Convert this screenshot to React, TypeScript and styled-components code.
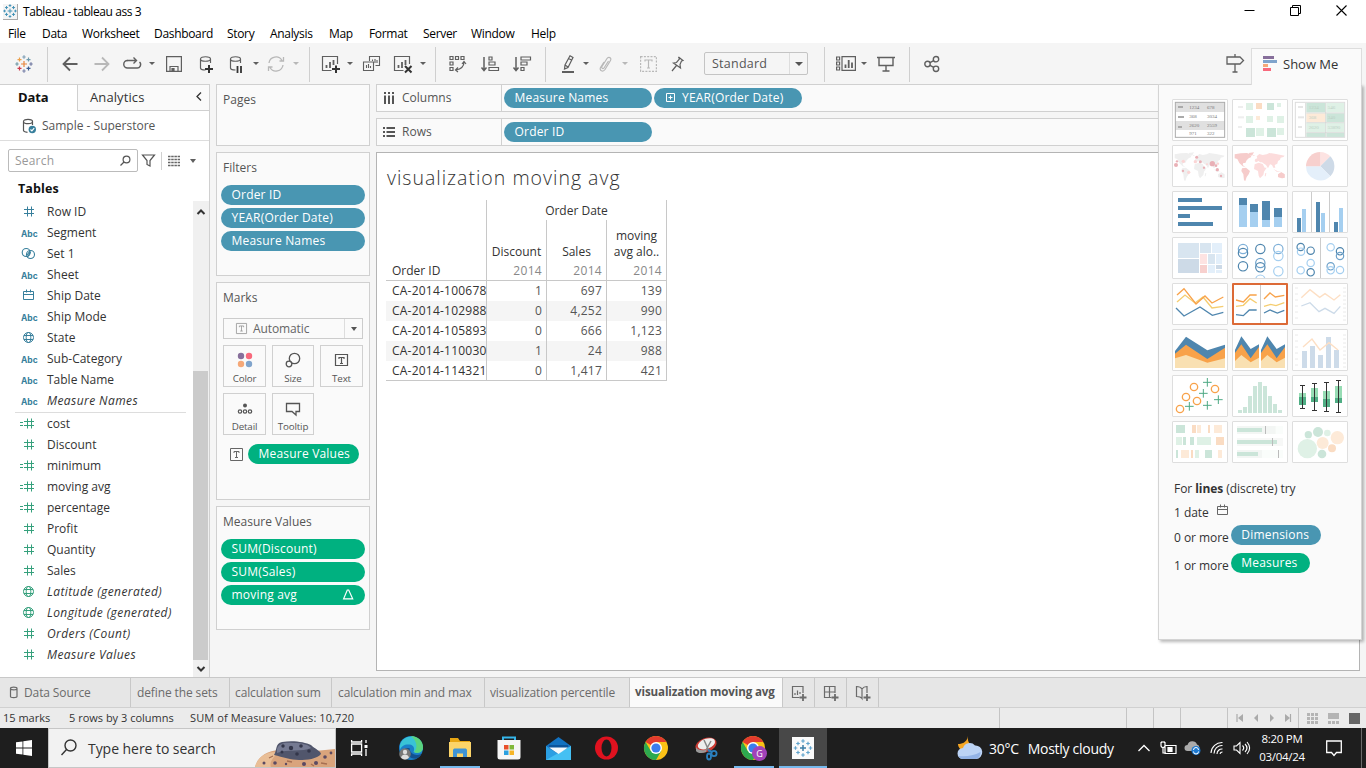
import React from "react";
import styled, { createGlobalStyle, css } from "styled-components";

const UI = `"Open Sans", "Noto Sans", sans-serif`;
const BLUE = "#4996b2";
const GREEN = "#00b180";
const INK = "#555";
const LINE = "#d0d0d0";

const Global = createGlobalStyle`
  * { box-sizing: border-box; }
  body { margin: 0; background: #f5f5f5; font-family: ${UI}; font-size: 12px; color: #333; overflow: hidden; }
  svg { display: block; flex: none; overflow: visible; }
`;

const Screen = styled.div`
  width: 1366px;
  height: 768px;
  display: flex;
  flex-direction: column;
  position: relative;
  overflow: hidden;
  white-space: nowrap;
`;

/* ---------- title and menu ---------- */
const TitleBar = styled.header`
  height: 23px;
  background: #fff;
  display: flex;
  align-items: center;
  padding-left: 3px;
  color: #000;
  font-size: 12px;
  letter-spacing: -0.42px;
`;
const AppIcon = styled.span`
  width: 15px;
  height: 16px;
  margin-right: 5px;
  background: #f4f4f4;
  border-right: 1px solid #aaa;
  border-bottom: 1px solid #aaa;
`;
const WindowButtons = styled.div`
  margin-left: auto;
  display: flex;
  gap: 35px;
  padding-right: 19px;
  margin-top: -2px;
`;
const MenuBar = styled.nav`
  height: 20px;
  background: #fff;
  display: flex;
  align-items: center;
  color: #000;
`;
const MenuItem = styled.span<{ $w: number }>`
  width: ${(p) => p.$w}px;
  letter-spacing: -0.32px;
`;

/* ---------- toolbar ---------- */
const Toolbar = styled.div`
  height: 41px;
  background: #f5f5f5;
  display: flex;
  align-items: center;
`;
const Tool = styled.span<{ $w: number; $ml?: number; $dim?: boolean }>`
  width: ${(p) => p.$w}px;
  margin-left: ${(p) => p.$ml ?? 0}px;
  height: 40px;
  flex: none;
  display: flex;
  align-items: center;
  justify-content: center;
  color: ${(p) => (p.$dim ? "#b8b8b8" : "#5f5f5f")};
`;
const ToolSep = styled.i<{ $ml?: number }>`
  width: 1px;
  height: 35px;
  margin: 1px 0 0 ${(p) => p.$ml ?? 0}px;
  background: #cfcfcf;
`;
const Caret = styled.i<{ $s?: number }>`
  border: ${(p) => p.$s ?? 3}px solid transparent;
  border-top: ${(p) => (p.$s ?? 3) + 0.5}px solid currentColor;
  border-bottom: 0;
`;
const FitSelect = styled.div`
  width: 104px;
  height: 23px;
  margin-left: 15px;
  border: 1px solid #c4c4c4;
  border-radius: 2px;
  background: #f5f5f5;
  display: flex;
  align-items: center;
  padding-left: 7px;
  font-size: 12.5px;
  letter-spacing: 0.25px;
  color: ${INK};
`;
const SelectArrow = styled.span`
  margin-left: auto;
  width: 18px;
  height: 100%;
  border-left: 1px solid #ddd;
  display: flex;
  align-items: center;
  justify-content: center;
  color: #555;
`;

/* ---------- body ---------- */
const Body = styled.main`
  height: 593px;
  display: flex;
  background: #f5f5f5;
`;
const DataPane = styled.aside`
  width: 210px;
  background: #fff;
  border-right: 1px solid ${LINE};
  border-top: 1px solid ${LINE};
  display: flex;
  flex-direction: column;
`;
const PaneTabs = styled.div`
  display: flex;
  height: 26px;
`;
const DataTab = styled.b`
  width: 77px;
  padding: 3px 0 0 18px;
  font-size: 13px;
  color: #111;
  letter-spacing: -0.15px;
`;
const AnalyticsTab = styled.div`
  flex: 1;
  background: #fafafa;
  border-left: 1px solid ${LINE};
  border-bottom: 1px solid ${LINE};
  padding: 3px 6px 0 12px;
  display: flex;
  justify-content: space-between;
  font-size: 13px;
  letter-spacing: 0.1px;
`;
const Source = styled.div`
  height: 30px;
  border-bottom: 1px solid #ddd;
  display: flex;
  align-items: center;
  gap: 6px;
  padding-left: 22px;
  color: ${INK};
`;
const SearchRow = styled.div`
  display: flex;
  align-items: center;
  padding: 8px 0 0 8px;
`;
const SearchBox = styled.div`
  width: 130px;
  height: 23px;
  border: 1px solid #bbb;
  border-radius: 2px;
  display: flex;
  align-items: center;
  justify-content: space-between;
  padding: 0 6px;
  color: #999;
  letter-spacing: 0.2px;
`;
const ThinRule = styled.i`
  width: 1px;
  height: 18px;
  background: ${LINE};
  margin: 0 6px;
`;
const ViewCaret = styled.span`
  width: 24px;
  display: flex;
  justify-content: center;
  color: #5f5f5f;
`;
const TablesHead = styled.b`
  height: 29px;
  line-height: 33px;
  padding-left: 18px;
  font-size: 12.5px;
  color: #111;
  letter-spacing: 0.1px;
`;
const FieldArea = styled.div`
  flex: 1;
  display: flex;
  justify-content: space-between;
`;
const FieldList = styled.div`
  width: 186px;
`;
const Field = styled.div<{ $italic?: boolean }>`
  height: 21px;
  display: flex;
  align-items: center;
  color: #333;
  ${(p) => p.$italic && css`font-style: italic; letter-spacing: 0.42px;`}
`;
const FieldIcon = styled.span<{ $green?: boolean }>`
  width: 47px;
  padding-left: 19px;
  display: flex;
  color: ${(p) => (p.$green ? "#35a07c" : "#377f9c")};
`;
const Abc = styled.b`
  font: 700 8.5px Inter, sans-serif;
  margin: 3px 0 0 2px;
  letter-spacing: 0;
`;
const FieldRule = styled.hr`
  margin: 1px 0 0 15px;
  border: 0;
  border-top: 1px solid #ddd;
`;
const Scroll = styled.div`
  width: 16px;
  background: #f0f0f0;
  display: flex;
  flex-direction: column;
  justify-content: space-between;
  padding: 8px 1px 5px 0;
  align-items: center;
`;
const ScrollThumb = styled.i`
  width: 15px;
  height: 289px;
  margin: auto 0 6px;
  background: #cbcbcb;
`;

const Cards = styled.section`
  width: 154px;
  margin-left: 6px;
  display: flex;
  flex-direction: column;
  gap: 6px;
`;
const Card = styled.div<{ $h: number }>`
  height: ${(p) => p.$h}px;
  border: 1px solid ${LINE};
  background: #fafafa;
  padding: 5px 4px;
  display: flex;
  flex-direction: column;
`;
const CardTitle = styled.div`
  height: 27px;
  line-height: 20px;
  padding-left: 2px;
  color: ${INK};
  letter-spacing: 0;
`;
const Pill = styled.div<{ $green?: boolean; $w?: number; $px?: number }>`
  height: 20px;
  ${(p) => p.$w && css`width: ${p.$w}px;`}
  flex: none;
  border-radius: 10px;
  background: ${(p) => (p.$green ? GREEN : BLUE)};
  color: #fff;
  padding: 0 ${(p) => p.$px ?? 10.5}px 1px;
  display: flex;
  align-items: center;
  justify-content: space-between;
  font-weight: 500;
  letter-spacing: 0.2px;
`;
const PillStack = styled.div`
  display: grid;
  gap: 3px;
`;
const MarkSelect = styled.div`
  margin: 3px 2px 6px;
  height: 21px;
  flex: none;
  border: 1px solid #ccc;
  display: flex;
  align-items: center;
  gap: 6px;
  padding-left: 12px;
  color: #666;
  letter-spacing: -0.1px;
`;
const MarkGrid = styled.div`
  display: grid;
  grid-template-columns: 43px 42px 43px;
  gap: 6px;
  margin: 0 2px;
  justify-content: space-between;
`;
const MarkButton = styled.div`
  height: 42px;
  border: 1px solid ${LINE};
  display: flex;
  flex-direction: column;
  align-items: center;
  justify-content: space-between;
  padding: 6px 0 1px;
  font-size: 9.8px;
  letter-spacing: -0.15px;
  line-height: 13px;
  color: ${INK};
`;
const MarkPillRow = styled.div`
  display: flex;
  align-items: center;
  gap: 5px;
  padding: 9px 0 0 9px;
`;

const Sheet = styled.section`
  flex: 1;
  margin-left: 6px;
  margin-right: 6px;
  display: flex;
  flex-direction: column;
`;
const Shelf = styled.div`
  height: 28px;
  margin-bottom: 6px;
  border: 1px solid ${LINE};
  background: #fafafa;
  display: flex;
  align-items: center;
  gap: 2px;
`;
const ShelfName = styled.div`
  width: 125px;
  height: 100%;
  border-right: 1px solid ${LINE};
  display: flex;
  align-items: center;
  gap: 7px;
  padding: 0 0 1px 6px;
  color: ${INK};
`;
const PillLead = styled.span`
  display: flex;
  align-items: center;
  gap: 6px;
`;
const Canvas = styled.div`
  height: 519px;
  border: 1px solid #b4b4b4;
  background: #fff;
  padding: 10px 0 0 9px;
`;
const SheetTitle = styled.h1`
  margin: 0;
  height: 37px;
  line-height: 30px;
  padding-left: 1px;
  font-size: 19.5px;
  font-weight: 300;
  letter-spacing: 1px;
  color: #333;
`;
const Grid = styled.div`
  width: 281px;
  display: grid;
  grid-template-columns: 101px 60px 60px 60px;
  border-bottom: 1px solid #c8c8c8;
`;
const HeadSide = styled.div`
  grid-row: 1 / 3;
  height: 81px;
  padding: 0 0 1px 6px;
  display: flex;
  align-items: flex-end;
  border-right: 1px solid #c8c8c8;
  border-bottom: 1px solid #c8c8c8;
`;
const HeadTop = styled.div`
  grid-column: 2 / 5;
  height: 20px;
  line-height: 22px;
  text-align: center;
  border-right: 1px solid #c8c8c8;
`;
const Head = styled.div`
  height: 61px;
  border-right: 1px solid #c8c8c8;
  border-bottom: 1px solid #c8c8c8;
  display: flex;
  flex-direction: column;
  justify-content: flex-end;
  text-align: center;
  line-height: 16px;
`;
const Year = styled.span`
  text-align: right;
  padding: 3px 4px 1px 0;
  color: #888;
  letter-spacing: 0.3px;
`;
const Cell = styled.div<{ $odd: boolean; $label?: boolean }>`
  height: 20px;
  line-height: 20px;
  border-right: 1px solid #c8c8c8;
  background: ${(p) => (p.$odd ? "#f5f5f5" : "#fff")};
  text-align: ${(p) => (p.$label ? "left" : "right")};
  padding: ${(p) => (p.$label ? "0 0 0 6px" : "0 4px 0 0")};
  color: ${(p) => (p.$label ? "#333" : "#555")};
  letter-spacing: 0.22px;
  &:nth-last-child(-n + 4) {
    height: 19px;
  }
`;

/* ---------- show me ---------- */
const ShowMeTab = styled.div`
  position: absolute;
  left: 1251px;
  top: 48px;
  width: 111px;
  height: 37px;
  z-index: 2;
  background: #fafafa;
  border: 1px solid #ddd;
  border-bottom: 0;
  display: flex;
  align-items: center;
  gap: 6px;
  padding: 0 0 7px 11px;
  font-size: 13px;
  color: #333;
`;
const ShowMe = styled.aside`
  position: absolute;
  left: 1158px;
  top: 84px;
  width: 204px;
  height: 556px;
  background: #fafafa;
  border: 1px solid #d4d4d4;
  box-shadow: 2px 2px 3px rgba(0, 0, 0, 0.28);
  padding: 14px 0 0 13px;
`;
const Thumbs = styled.div`
  display: grid;
  grid-template-columns: repeat(3, 56px);
  gap: 4px;
  margin-bottom: 14px;
`;
const Thumb = styled.div<{ $on?: boolean }>`
  height: 42px;
  background: #fff;
  border: ${(p) => (p.$on ? "2px solid #dc6a37" : "1px solid #dedede")};
  border-radius: 1px;
  overflow: hidden;
`;
const Hint = styled.div<{ $h: number }>`
  height: ${(p) => p.$h}px;
  display: flex;
  align-items: center;
  padding-left: 2px;
  gap: 3px;
  color: #333;
  letter-spacing: -0.05px;
`;
const HintMark = styled.span`
  padding: 0 0 5px 1px;
  color: #666;
`;
const HintPill = styled(Pill)`
  margin: 0 0 4px -1px;
`;

/* ---------- sheet tabs, status ---------- */
const SheetTabs = styled.div`
  height: 30px;
  border-top: 1px solid #c8c8c8;
  background: #e6e6e6;
  display: flex;
`;
const SheetTab = styled.div<{ $w: number; $pl?: number; $on?: boolean }>`
  width: ${(p) => p.$w}px;
  flex: none;
  border-right: 1px solid #c8c8c8;
  display: flex;
  align-items: center;
  gap: 5px;
  padding-left: ${(p) => p.$pl ?? 6}px;
  letter-spacing: -0.12px;
  color: #6b6b6b;
  ${(p) => p.$on && css`background: #fafafa; font-weight: 700; color: #555; font-size: 11.6px; padding-bottom: 3px;`}
`;
const Status = styled.div`
  height: 21px;
  border-top: 1px solid #d0d0d0;
  background: #ebebeb;
  display: flex;
  align-items: center;
  font-size: 11px;
  color: #333;
`;
const StatusText = styled.span<{ $w: number; $ls?: number }>`
  width: ${(p) => p.$w}px;
  padding: 0 0 2px 3px;
  letter-spacing: ${(p) => p.$ls ?? 0}px;
`;
const StatusCell = styled.span<{ $w: number }>`
  width: ${(p) => p.$w}px;
  height: 20px;
  border-left: 1px solid #c4c4c4;
  display: flex;
  align-items: center;
  justify-content: space-between;
  padding: 0 6px 0 8px;
`;

/* ---------- taskbar ---------- */
const Taskbar = styled.footer`
  height: 40px;
  background: #1e1e1e;
  display: flex;
  color: #fff;
`;
const TaskItem = styled.span<{ $w: number; $open?: boolean; $on?: boolean }>`
  width: ${(p) => p.$w}px;
  flex: none;
  display: flex;
  align-items: center;
  justify-content: center;
  ${(p) => p.$on && css`background: #484848;`}
  ${(p) => p.$open && css`box-shadow: inset 0 -2px 0 #76b9ed;`}
`;
const TaskSearch = styled.div`
  width: 288px;
  background: #f2f2f2;
  border: 1px solid #c6c6c6;
  display: flex;
  align-items: center;
  padding-left: 12px;
  color: #333;
  font-size: 14px;
  letter-spacing: -0.05px;
`;
const SearchArt = styled.span`
  margin-left: auto;
  align-self: flex-end;
`;
const Weather = styled.div`
  margin-left: 130px;
  width: 181px;
  display: flex;
  align-items: center;
  font-size: 14px;
  letter-spacing: -0.28px;
`;
const Temp = styled.span`
  margin: 0 9px 0 7px;
`;
const Clock = styled.div`
  width: 70px;
  display: flex;
  flex-direction: column;
  justify-content: center;
  text-align: center;
  font-size: 11.5px;
  line-height: 18px;
  letter-spacing: -0.3px;
`;
const ShowDesktop = styled.i`
  margin-left: auto;
  width: 5px;
  border-left: 1px solid #6a6a6a;
`;

/* ---------- icons ---------- */
type IcoProps = { w?: number; h?: number; sw?: number; children: React.ReactNode };
const Ico = ({ w = 18, h = 18, sw = 1.2, children }: IcoProps) => (
  <svg width={w} height={h} viewBox={`0 0 ${w} ${h}`} fill="none" stroke="currentColor" strokeWidth={sw}>
    {children}
  </svg>
);

const plus = (x: number, y: number, r: number, c: string, k = 1.2) => (
  <path key={`${x}-${y}`} d={`M${x - r} ${y}h${2 * r}M${x} ${y - r}v${2 * r}`} stroke={c} strokeWidth={k} />
);

const Mark = ({ size = 18, mono }: { size?: number; mono?: string }) => (
  <svg width={size} height={size} viewBox="0 0 18 18" fill="none">
    {plus(9, 9, 3, mono ?? "#e8863c", 1.2)}
    {plus(4.5, 4.6, 2, mono ?? "#eba04c")}
    {plus(13.5, 4.6, 2, mono ?? "#6f9aac")}
    {plus(4.5, 13.4, 2, mono ?? "#cc3b4c")}
    {plus(13.5, 13.4, 2, mono ?? "#3a5b8f")}
    {plus(9, 2, 1.7, mono ?? "#7f9fb6")}
    {plus(9, 16, 1.7, mono ?? "#7a83aa")}
    {plus(2, 9, 1.7, mono ?? "#7099a6")}
    {plus(16, 9, 1.7, mono ?? "#7079a2")}
  </svg>
);

const Cylinder = () => <path d="M2.5 4v9c0 1.3 2 2 5 2M12.5 8V4M2.5 4c0-3 10-3 10 0s-10 3-10 0" />;

const Globe = () => (
  <Ico w={18} h={13} sw={1}>
    <circle cx="9.5" cy="6.5" r="5" />
    <ellipse cx="9.5" cy="6.5" rx="2.3" ry="5" />
    <path d="M5 4.5h9M5 8.5h9" />
  </Ico>
);
const Calendar = () => (
  <Ico w={18} h={13} sw={1}>
    <path d="M4.5 2.5h10v8h-10zM4.5 5.5h10M7.5 0.5v3M11.5 0.5v3" />
  </Ico>
);
const FieldGlyph = ({ kind }: { kind: string }) => {
  if (kind === "abc") return <Abc>Abc</Abc>;
  if (kind === "globe") return <Globe />;
  if (kind === "date") return <Calendar />;
  if (kind === "set")
    return (
      <Ico w={18} h={13} sw={1.1}>
        <circle cx="7.2" cy="5.5" r="4" />
        <circle cx="11.5" cy="7.5" r="4" />
        <path d="M8 8l3-4M8.5 10l3-5" />
      </Ico>
    );
  return (
    <Ico w={18} h={13} sw={1}>
      <path d="M8.5 1.5v10M12.5 1.5v10M5 4.5h10M5 8.5h10" />
      {kind === "calc" && <path d="M1 5.5h3M1 8.5h3" />}
    </Ico>
  );
};

const BarBox = () => (
  <>
    <path d="M16.5 9V1.5h-15v14h9" />
    <path d="M5.5 13v-3M9 13V7M12.5 10V5" strokeWidth="1.8" />
  </>
);
const TextIcon = ({ w = 13, c = "currentColor" }: { w?: number; c?: string }) => (
  <svg width={w} height={w} viewBox="0 0 13 13" fill="none" stroke={c}>
    <path d="M0.5 0.5h12v12h-12zM4 5V3.5h5V5M6.5 3.5v6M5 9.5h3" />
  </svg>
);

/* ---------- chart thumbnails, drawn on a 168 x 126 grid ---------- */
type R = [number, number, number, number, string];
const rects = (list: R[]) =>
  list.map(([x, y, w, h, f], i) => <rect key={i} x={x} y={y} width={w} height={h} fill={f} />);
const D = "#4f86ae";
const L = "#a5cff0";
const G1 = "#dff1e6";
const G2 = "#cbe5d9";
const O1 = "#fdead8";
const O2 = "#fadcc3";
const line = (pts: string, c: string, k = 4) => <polyline points={pts} fill="none" stroke={c} strokeWidth={k} />;
const rings = (list: [number, number, string][], r: number, k = 4) =>
  list.map(([x, y, c], i) => <circle key={i} cx={x} cy={y} r={r} fill="none" stroke={c} strokeWidth={k} />);

const AMERICAS =
  "M8 28L26 25 45 24 54 28 58 36 50 40 44 46 40 54 34 54 32 60 40 66 32 64 22 54 16 42 8 40zM50 24L66 22 60 32 54 30zM30 70L42 68 54 78 50 88 44 96 40 108 36 106 34 88 28 78z";
const OLD_WORLD =
  "M68 48L70 42 76 40 74 34 82 27 92 30 104 28 112 24 132 27 158 32 154 36 146 38 144 44 138 48 136 56 128 60 130 68 124 68 120 60 114 58 108 70 102 60 96 56 90 52 84 52 80 48 72 52zM68 58L80 53 92 57 98 68 104 68 96 80 94 90 84 100 80 92 78 78 66 72zM124 72L136 78 148 80 134 80zM138 88L148 82 158 88 158 98 150 100 138 96zM100 84l3 0-2 10-3 0zM62 30l6 0-2 4z";

const thumbs: React.ReactNode[] = [
  <>
    {rects([[10, 10, 148, 29, "#e0e0e0"], [10, 66, 148, 27, "#e0e0e0"], [18, 21, 15, 6, "#aaa"], [18, 51, 18, 6, "#aaa"], [18, 81, 12, 6, "#aaa"]])}
    <rect x="10" y="10" width="148" height="105" fill="none" stroke="#aaa" strokeWidth="3" />
    <g fontSize="15" fill="#777" fontFamily="Liberation Serif, serif">
      <text x="52" y="30">1234</text><text x="105" y="30">678</text>
      <text x="52" y="57">368</text><text x="105" y="57">3034</text>
      <text x="52" y="84">2620</text><text x="105" y="84">2559</text>
      <text x="52" y="108">971</text><text x="105" y="108">322</text>
    </g>
  </>,
  rects([[18, 21, 15, 6, "#eee"], [18, 52, 18, 6, "#eee"], [18, 81, 12, 6, "#eee"], [42, 12, 21, 21, G1], [72, 12, 18, 18, O2], [105, 12, 21, 21, G2], [135, 12, 12, 12, G1], [42, 51, 21, 21, G1], [72, 51, 12, 12, O1], [105, 51, 18, 18, G1], [135, 51, 21, 21, G1], [42, 87, 27, 27, G2], [72, 87, 24, 24, G1], [105, 87, 27, 27, G2], [135, 87, 21, 21, G1]]),
  <>
    {rects([[18, 21, 15, 6, "#e6e6e6"], [18, 52, 18, 6, "#e6e6e6"], [18, 81, 12, 6, "#e6e6e6"], [43, 12, 57, 28, G2], [103, 12, 54, 28, G1], [43, 43, 57, 26, O1], [103, 43, 54, 26, G2], [43, 72, 57, 27, G1], [103, 72, 54, 27, G1], [43, 102, 57, 12, G2], [103, 102, 54, 12, G2]])}
    <path d="M43 42h114M43 71h114M43 101h114M41 12v102M101 12v102" stroke="#d2d5d3" strokeWidth="2.5" />
    <rect x="10" y="10" width="148" height="105" fill="none" stroke="#ddd" strokeWidth="3" />
    <g fontSize="15" fill="#bccfc4" fontFamily="Liberation Serif, serif">
      <text x="50" y="30">1234</text><text x="107" y="30">546</text>
      <text x="50" y="60">368</text><text x="107" y="60">340</text>
      <text x="50" y="90">2620</text><text x="107" y="90">53890</text>
    </g>
  </>,
  <>
    <path d={AMERICAS + OLD_WORLD} fill="#efefef" />
    <g fill="#e9b0b6">
      <circle cx="12" cy="60" r="6" /><circle cx="121" cy="56" r="8" /><circle cx="85" cy="50" r="4.5" /><circle cx="74" cy="37" r="4.5" />
      <circle cx="136" cy="74" r="5" /><circle cx="132" cy="62" r="4" /><circle cx="147" cy="93" r="3.5" /><circle cx="15" cy="49" r="3.5" /><circle cx="96" cy="68" r="3.5" /><circle cx="33" cy="78" r="3.5" />
    </g>
    <g fill="#fbd5d5">
      <circle cx="34" cy="49" r="5" /><circle cx="70" cy="50" r="5" /><circle cx="50" cy="82" r="5" /><circle cx="138" cy="56" r="3.5" /><circle cx="105" cy="58" r="3" />
    </g>
  </>,
  <>
    <path d={AMERICAS} fill="#f6cccb" />
    <path d={OLD_WORLD} fill="#fcdcdc" />
    <path d="M138 88L148 82 158 88 158 98 150 100 138 96z" fill="#f6cccb" />
  </>,
  <>
    <path d="M85 64V21A43 43 0 0 1 115 34z" fill="#fde3e2" />
    <path d="M85 64L115 34A43 43 0 0 1 115 94z" fill="#cedae7" />
    <path d="M85 64L115 94A43 43 0 0 1 42 64z" fill="#e4effa" />
    <path d="M85 64H42A43 43 0 0 1 85 21z" fill="#f7d0ce" />
  </>,
  rects([[18, 21, 72, 12, D], [18, 45, 132, 12, D], [18, 69, 36, 12, D], [18, 93, 105, 12, D]]),
  rects([[21, 21, 24, 21, D], [21, 42, 24, 66, L], [54, 39, 24, 24, D], [54, 63, 24, 45, L], [90, 30, 24, 57, D], [90, 87, 24, 21, L], [126, 51, 24, 27, D], [126, 78, 24, 30, L]]),
  rects([[57, 3, 3, 120, "#ccc"], [111, 3, 3, 120, "#ccc"], [15, 81, 12, 42, D], [30, 54, 12, 69, L], [72, 33, 12, 90, D], [87, 66, 12, 57, L], [126, 93, 12, 30, D], [141, 51, 12, 72, L]]),
  rects([[18, 18, 63, 45, "#d8e5f0"], [18, 66, 63, 42, "#cddae7"], [84, 18, 33, 30, "#d8e5f0"], [120, 18, 30, 30, "#e3effa"], [84, 51, 21, 30, "#fde3e2"], [108, 51, 21, 30, "#d8e5f0"], [132, 51, 18, 30, "#e3effa"], [84, 84, 21, 24, "#f7d0ce"], [108, 84, 21, 24, "#e3effa"], [132, 84, 18, 12, "#cddae7"], [132, 99, 18, 9, "#e3effa"]]),
  rings([[33, 36, "#7fb0d8"], [33, 48, D], [33, 88, D], [85, 36, D], [85, 78, "#6ea2cb"], [85, 91, D], [85, 128, L], [139, 36, "#7fb0d8"], [139, 57, L], [139, 103, L]], 14, 3.6),
  <>
    <rect x="84" y="3" width="3" height="120" fill="#ccc" />
    {rings([[26, 30, D], [27, 44, L], [56, 41, D], [56, 78, L], [56, 106, D], [26, 100, L], [116, 31, L], [144, 43, D], [144, 57, "#6ea2cb"], [116, 88, "#6ea2cb"], [116, 100, L], [144, 99, L]], 11, 3.6)}
  </>,
  <>
    {line("15,57 39,36 69,60 93,42 120,75 154,70", "#f5cd70")}
    {line("15,36 36,17 72,63 99,39 120,60 154,42", "#f8a24a")}
    {line("12,75 36,99 84,72 121,97 154,88", D)}
  </>,
  <>
    <rect x="84" y="3" width="3" height="120" fill="#ccc" />
    {line("12,51 34,57 54,36 74,36", "#f8a24a")}
    {line("12,70 34,67 54,47 74,60", "#f5cd70")}
    {line("12,95 34,98 52,81 74,81", D)}
    {line("96,48 114,30 130,42 157,37", "#f8a24a")}
    {line("96,70 116,64 132,68 157,59", "#f5cd70")}
    {line("96,90 114,81 136,90 157,82", D)}
  </>,
  <>
    {line("28,44 54,20 83,43 99,32 126,51 145,35", "#fddfc4")}
    {line("28,69 54,59 81,86 99,76 126,91 145,70", "#cddbe9")}
    <path d="M9 15h9M9 33h9M9 51h9M9 69h9M9 87h9M9 105h9M153 15h9M153 27h9M153 39h9M153 51h9M153 63h9M153 75h9M153 87h9M153 99h9M153 111h9" stroke="#eaeaea" strokeWidth="3" />
  </>,
  <>
    <path d="M9 66L42 23 106 64 159 47V117H9z" fill={D} />
    <path d="M9 74L42 47 106 90 159 56V117H9z" fill="#f8a24a" />
    <path d="M9 88L42 78 106 101 159 88V117H9z" fill="#f9e0b2" />
  </>,
  <>
    <path d="M9 63L28 22 56 60 81 46V117H9zM87 63L106 22 134 60 159 46V117H87z" fill={D} />
    <path d="M9 72L28 46 56 88 81 54V117H9zM87 72L106 46 134 88 159 54V117H87z" fill="#f8a24a" />
    <path d="M9 96L28 78 56 100 81 86V117H9zM87 96L106 78 134 100 159 86V117H87z" fill="#f9e0b2" />
  </>,
  <>
    {rects([[30, 66, 15, 51, "#cddbe9"], [54, 51, 15, 66, "#cddbe9"], [78, 78, 15, 39, "#cddbe9"], [102, 24, 15, 93, "#cddbe9"], [126, 63, 15, 54, "#cddbe9"]])}
    {line("33,54 60,30 84,63 111,41 138,63", "#fddfc4")}
    <path d="M9 18h9M9 36h9M9 54h9M9 72h9M9 90h9M9 108h9M153 18h9M153 30h9M153 42h9M153 54h9M153 66h9M153 78h9M153 90h9M153 102h9M153 114h9" stroke="#eaeaea" strokeWidth="3" />
  </>,
  <>
    {rings([[66, 36, "#f8a24a"], [129, 42, "#f8a24a"], [42, 66, "#f8a24a"], [75, 78, "#f8a24a"], [24, 102, "#f8a24a"]], 11, 4)}
    {[[106, 22], [94, 55], [139, 74], [106, 91], [52, 94]].map(([x, y]) => plus(x, y, 13, "#4fa985", 3))}
  </>,
  rects([[18, 105, 12, 9, G2], [33, 96, 12, 18, G2], [48, 63, 12, 51, G2], [63, 33, 12, 81, G2], [78, 21, 12, 93, G2], [93, 33, 12, 81, G2], [108, 63, 12, 51, G2], [123, 87, 12, 27, G2], [138, 105, 12, 9, G2]]),
  <>
    {rects([[21, 54, 21, 12, "#97dcb4"], [21, 66, 21, 24, "#4fae84"], [57, 39, 21, 27, "#97dcb4"], [57, 66, 21, 15, "#4fae84"], [93, 48, 21, 24, "#97dcb4"], [93, 72, 21, 24, "#4fae84"], [129, 33, 21, 36, "#97dcb4"], [129, 69, 21, 15, "#4fae84"]])}
    <path d="M31.5 31V100M24 31.5h15M24 100.5h15M67.5 25V106M60 25.5h15M60 106.5h15M103.5 22V109M96 22.5h15M96 109.5h15M139.5 16V112M132 16.5h15M132 112.5h15" stroke="#333" strokeWidth="3" />
  </>,
  rects([[12, 12, 27, 24, G2], [60, 12, 12, 24, O2], [75, 12, 12, 24, O1], [108, 12, 6, 24, O2], [126, 12, 24, 24, O1], [12, 48, 18, 24, G1], [33, 48, 9, 24, G2], [54, 48, 12, 24, G2], [75, 48, 42, 24, G1], [132, 48, 24, 24, O2], [12, 87, 6, 24, G2], [27, 87, 24, 24, O1], [57, 87, 6, 24, O2], [69, 87, 12, 24, G1], [99, 87, 21, 24, G2], [138, 87, 12, 24, O1]]),
  rects([[15, 15, 138, 24, "#fafdfb"], [15, 15, 116, 24, "#f3f6f4"], [15, 21, 75, 12, G2], [99, 15, 3, 24, "#bbb"], [15, 51, 138, 24, "#f7f8f7"], [15, 57, 120, 12, G2], [120, 51, 3, 24, "#bbb"], [15, 87, 138, 24, "#fafdfb"], [15, 87, 75, 24, "#f3f6f4"], [15, 93, 63, 12, G2], [138, 87, 3, 24, "#bbb"]]),
  <>
    <circle cx="46" cy="83" r="29" fill={G1} /><circle cx="49" cy="41" r="11" fill={G2} /><circle cx="78" cy="33" r="15" fill={G2} />
    <circle cx="106" cy="36" r="10" fill={G1} /><circle cx="136" cy="50" r="20" fill={O1} /><circle cx="92" cy="66" r="18" fill={O1} />
    <circle cx="120" cy="82" r="12" fill={O2} /><circle cx="90" cy="99" r="13" fill={G2} />
  </>,
];

/* ---------- data ---------- */
const dims: [string, string, boolean?][] = [
  ["num", "Row ID"], ["abc", "Segment"], ["set", "Set 1"], ["abc", "Sheet"], ["date", "Ship Date"], ["abc", "Ship Mode"],
  ["globe", "State"], ["abc", "Sub-Category"], ["abc", "Table Name"], ["abc", "Measure Names", true],
];
const measures: [string, string, boolean?][] = [
  ["calc", "cost"], ["num", "Discount"], ["calc", "minimum"], ["calc", "moving avg"], ["calc", "percentage"], ["num", "Profit"],
  ["num", "Quantity"], ["num", "Sales"], ["globe", "Latitude (generated)", true], ["globe", "Longitude (generated)", true],
  ["num", "Orders (Count)", true], ["num", "Measure Values", true],
];
const table = [
  ["CA-2014-100678", "1", "697", "139"],
  ["CA-2014-102988", "0", "4,252", "990"],
  ["CA-2014-105893", "0", "666", "1,123"],
  ["CA-2014-110030", "1", "24", "988"],
  ["CA-2014-114321", "0", "1,417", "421"],
];
const menu: [string, number][] = [
  ["File", 34], ["Data", 40], ["Worksheet", 72], ["Dashboard", 73], ["Story", 43], ["Analysis", 59], ["Map", 40],
  ["Format", 54], ["Server", 48], ["Window", 60], ["Help", 40],
];

const ChromeDisc = () => (
  <>
    <circle cx="12" cy="12" r="12" fill="#fbc116" />
    <path d="M12 12L1.6 6A12 12 0 0 1 22.4 6H12z" fill="#e33b2e" />
    <path d="M1.6 6A12 12 0 0 0 12 24L17.2 15 12 12 6.8 15z" fill="#2da94f" />
    <circle cx="12" cy="12" r="6" fill="#fff" />
    <circle cx="12" cy="12" r="4.6" fill="#3b7ded" />
  </>
);

export default function App() {
  return (
    <Screen>
      <Global />
      <TitleBar>
        <AppIcon><Mark size={14} mono="#3d8fb5" /></AppIcon>
        Tableau - tableau ass 3
        <WindowButtons>
          <Ico w={11} h={11} sw={1}><path d="M0.5 5.5h10" /></Ico>
          <Ico w={11} h={11} sw={1}><path d="M0.5 2.5h8v8h-8zM2.5 2.5v-2h8v8h-2" /></Ico>
          <Ico w={11} h={11} sw={1.1}><path d="M0.5 0.5l10 10M10.5 0.5l-10 10" /></Ico>
        </WindowButtons>
      </TitleBar>
      <MenuBar>
        <MenuItem $w={8} />
        {menu.map(([m, w]) => <MenuItem key={m} $w={w}>{m}</MenuItem>)}
      </MenuBar>

      <Toolbar>
        <Tool $w={47}><Mark size={18} /></Tool>
        <ToolSep />
        <Tool $w={32} $ml={6}><Ico w={16} h={16} sw={1.8}><path d="M15.5 8H1.5M8 1.5L1.5 8 8 14.5" /></Ico></Tool>
        <Tool $w={32} $dim><Ico w={16} h={16} sw={1.8}><path d="M0.5 8h14M8 1.5L14.5 8 8 14.5" /></Ico></Tool>
        <Tool $w={28}><Ico w={18} h={14} sw={1.4}><path d="M5 3.5h-0.5a3.5 3.5 0 0 0 0 7.5h9a3.5 3.5 0 0 0 3-6" /><path d="M4.5 3.5h8M10.5 0.5l3 3-3 3" /></Ico></Tool>
        <Tool $w={12}><Caret /></Tool>
        <Tool $w={32}><Ico w={16} h={16}><path d="M0.6 0.6h14.8v14.8H0.6zM4 15v-4.5h8V15" /><path d="M6 12.5h2v2.5H6z" fill="currentColor" /></Ico></Tool>
        <Tool $w={32}><Ico w={16} h={18}><Cylinder /><path d="M11 10v8M7 14h8" stroke="#333" strokeWidth="2" /></Ico></Tool>
        <Tool $w={28}><Ico w={16} h={18}><Cylinder /><path d="M9.5 11v7M13 11v7" stroke="#333" strokeWidth="1.8" /></Ico></Tool>
        <Tool $w={12}><Caret /></Tool>
        <Tool $w={28} $dim><Ico w={18} h={16} sw={1.3}><path d="M2 7A7 7 0 0 1 15 4.5M16 9A7 7 0 0 1 3 11.5M16.5 1v4h-4M1.5 15v-4h4" /></Ico></Tool>
        <Tool $w={12} $dim><Caret /></Tool>
        <ToolSep $ml={7} />
        <Tool $w={29} $ml={5}><Ico w={18} h={18}><BarBox /><path d="M15 10.5v7.5M11 14h8" stroke="#333" strokeWidth="2" /></Ico></Tool>
        <Tool $w={12}><Caret /></Tool>
        <Tool $w={31}><Ico w={18} h={17} sw={1.1}><path d="M6.5 6V1.5h10v9h-4M0.5 7h10v8.5h-10zM3.5 13v-3M5.5 13V9M7.5 13v-2M9.5 6V4.5M12 8V4M14 8V5" /></Ico></Tool>
        <Tool $w={30}><Ico w={18} h={18}><BarBox /><path d="M12 11l6.5 6.5M18.5 11L12 17.5" stroke="#333" strokeWidth="2" /></Ico></Tool>
        <Tool $w={11}><Caret /></Tool>
        <ToolSep $ml={7} />
        <Tool $w={32} $ml={5}><Ico w={17} h={18}><path d="M1 1.5h3v3H1zM6.5 1.5h3v3h-3zM12 1.5h3v3h-3zM1 7h3v3H1zM1 12.5h3v3H1zM15 7c0 5-3 7-8 8M13 9l2-2.5 2 2.5M9 12.5L6.5 15 9 17" /></Ico></Tool>
        <Tool $w={33}><Ico w={18} h={16}><path d="M3 1v13M0.5 11.5L3 14.5l2.5-3" strokeWidth="1.5" /><path d="M8 1h3v3H8zM8 6h6v3H8zM8 11.5h9.5v3H8z" /></Ico></Tool>
        <Tool $w={32}><Ico w={18} h={16}><path d="M3 1v13M0.5 11.5L3 14.5l2.5-3" strokeWidth="1.5" /><path d="M8 1h9.5v3H8zM8 6h6v3H8zM8 11.5h3v3H8z" /></Ico></Tool>
        <ToolSep $ml={7} />
        <Tool $w={26} $ml={9}><Ico w={13} h={18}><path d="M8 0.8l3 1.7-5 10-3.5 1.5 0.5-4zM3 10l3 2M6.5 3.5l3 1.5" /><path d="M0 17h12" strokeWidth="2" /></Ico></Tool>
        <Tool $w={10}><Caret /></Tool>
        <Tool $w={28} $dim><Ico w={13} h={16}><path d="M9.5 5L5 12c-1 1.5-3 0-2-1.5L8 2.5c1.5-2.5 5-0.5 3.5 2L6 13.5c-2 3-6 1-4.5-2L5 6" /></Ico></Tool>
        <Tool $w={12} $dim><Caret /></Tool>
        <Tool $w={34} $dim><Ico w={17} h={16}><path d="M0.6 0.6h15.8v14.8H0.6z" strokeDasharray="2 1.3" /><path d="M5 5.5V4h7v1.5M8.5 4v8M7 12h3" /></Ico></Tool>
        <Tool $w={24}><Ico w={13} h={16}><path d="M7.5 1l4.5 3.5-1.5 0.5-1.5 3.5 0.5 3.5-7-5 3-0.5L8.5 3zM5.5 9.5L1 15" /></Ico></Tool>
        <FitSelect>Standard<SelectArrow><Caret $s={4} /></SelectArrow></FitSelect>
        <ToolSep $ml={16} />
        <Tool $w={26} $ml={8}><Ico w={20} h={15}><path d="M0.6 1h3v3h-3zM0.6 6h3v3h-3zM0.6 11h3v3h-3zM6 0.6h13.4v13.8H6z" /><path d="M9.5 12V8.5M12.7 12V4M16 12V6.5" strokeWidth="1.8" /></Ico></Tool>
        <Tool $w={10}><Caret /></Tool>
        <Tool $w={34}><Ico w={18} h={16}><path d="M0 1.5h18M2 1.5v8h14v-8M9 9.5V15M5.5 15h7" strokeWidth="1.4" /></Ico></Tool>
        <ToolSep $ml={6} />
        <Tool $w={32} $ml={6}><Ico w={16} h={16} sw={1.4}><circle cx="3.5" cy="8" r="2.7" /><circle cx="12" cy="3.2" r="2.7" /><circle cx="12" cy="12.8" r="2.7" /><path d="M6 6.6l3.7-2M6 9.4l3.7 2" /></Ico></Tool>
        <Tool $w={32} $ml={271}><Ico w={18} h={19} sw={1.3}><path d="M1 3h13l3.5 3.5L14 10H1zM9 0v3M9 10v8M6.5 18h5" /></Ico></Tool>
      </Toolbar>

      <Body>
        <DataPane>
          <PaneTabs>
            <DataTab>Data</DataTab>
            <AnalyticsTab>Analytics<Ico w={8} h={18} sw={1.3}><path d="M6 4.5L2 8.5l4 4" /></Ico></AnalyticsTab>
          </PaneTabs>
          <Source>
            <Ico w={14} h={16}><path d="M1.5 3.5v9c0 1 1.5 1.5 4 1.8M10.5 7V3.5M1.5 3.5c0-2.8 9-2.8 9 0s-9 2.8-9 0" /><circle cx="10.3" cy="11.5" r="3.7" fill="#377f9c" stroke="none" /><path d="M8.5 11.5l1.4 1.4 2.3-2.7" stroke="#fff" /></Ico>
            Sample - Superstore
          </Source>
          <SearchRow>
            <SearchBox>Search<Ico w={11} h={11} sw={1.2}><circle cx="6.5" cy="4.5" r="3.4" stroke="#555" /><path d="M4 7L0.5 10.5" stroke="#555" /></Ico></SearchBox>
            <Ico w={17} h={14} sw={1.2}><path d="M4.5 1h12L12 6.5V12l-3-1.5v-4z" stroke="#555" /></Ico>
            <ThinRule />
            <Ico w={13} h={12} sw={1.5}><path d="M0 1.5h12M0 4.5h12M0 7.5h12M0 10.5h12" stroke="#666" strokeDasharray="2.5 0.7" /></Ico>
            <ViewCaret><Caret $s={3.5} /></ViewCaret>
          </SearchRow>
          <TablesHead>Tables</TablesHead>
          <FieldArea>
            <FieldList>
              {dims.map(([k, n, it]) => <Field key={n} $italic={it}><FieldIcon><FieldGlyph kind={k} /></FieldIcon>{n}</Field>)}
              <FieldRule />
              {measures.map(([k, n, it]) => <Field key={n} $italic={it}><FieldIcon $green><FieldGlyph kind={k} /></FieldIcon>{n}</Field>)}
            </FieldList>
            <Scroll>
              <Ico w={8} h={6} sw={2}><path d="M0.5 5L4 1.5 7.5 5" /></Ico>
              <ScrollThumb />
              <Ico w={8} h={6} sw={2}><path d="M0.5 1L4 4.5 7.5 1" /></Ico>
            </Scroll>
          </FieldArea>
        </DataPane>

        <Cards>
          <Card $h={62}><CardTitle>Pages</CardTitle></Card>
          <Card $h={124}>
            <CardTitle>Filters</CardTitle>
            <PillStack><Pill>Order ID</Pill><Pill>YEAR(Order Date)</Pill><Pill>Measure Names</Pill></PillStack>
          </Card>
          <Card $h={218}>
            <CardTitle>Marks</CardTitle>
            <MarkSelect><TextIcon w={11} c="#999" />Automatic<SelectArrow><Caret $s={3.5} /></SelectArrow></MarkSelect>
            <MarkGrid>
              <MarkButton><svg width="16" height="16"><circle cx="4" cy="4" r="3.2" fill="#876f9b" /><circle cx="12" cy="4" r="3.2" fill="#f8697c" /><circle cx="4" cy="12" r="3.2" fill="#f5a878" /><circle cx="12" cy="12" r="3.2" fill="#80a4cc" /></svg>Color</MarkButton>
              <MarkButton><Ico w={16} h={16} sw={1.3}><circle cx="9.5" cy="6.5" r="5.2" /><circle cx="4" cy="12" r="2.8" fill="#fafafa" /></Ico>Size</MarkButton>
              <MarkButton><Ico w={16} h={16}><path d="M1.5 2.5h12v11h-12zM5 7V5.5h5V7M7.5 5.5v6M6 11.5h3" /></Ico>Text</MarkButton>
              <MarkButton><Ico w={16} h={16}><circle cx="8" cy="5.5" r="2" fill="currentColor" stroke="none" /><circle cx="3" cy="11.5" r="1.7" /><circle cx="8" cy="11.5" r="1.7" /><circle cx="13" cy="11.5" r="1.7" /></Ico>Detail</MarkButton>
              <MarkButton><Ico w={16} h={16} sw={1.3}><path d="M1.5 3.5h13v8h-3.5v3.5l-4-3.5H1.5z" /></Ico>Tooltip</MarkButton>
            </MarkGrid>
            <MarkPillRow><TextIcon c="#666" /><Pill $green $w={111}>Measure Values</Pill></MarkPillRow>
          </Card>
          <Card $h={124}>
            <CardTitle>Measure Values</CardTitle>
            <PillStack>
              <Pill $green>SUM(Discount)</Pill><Pill $green>SUM(Sales)</Pill>
              <Pill $green>moving avg<Ico w={12} h={11}><path d="M4.3 1h1.4l4 8.8H0.6z" /></Ico></Pill>
            </PillStack>
          </Card>
        </Cards>

        <Sheet>
          <Shelf>
            <ShelfName><Ico w={12} h={12} sw={2}><path d="M2 0v2M6 0v2M10 0v2M2 3.5V12M6 3.5V12M10 3.5V12" /></Ico>Columns</ShelfName>
            <Pill $w={148}>Measure Names</Pill>
            <Pill $w={148} $px={12}><PillLead><Ico w={10} h={10} sw={1}><path d="M0.5 0.5h8v8h-8zM2.5 4.5h4M4.5 2.5v4" /></Ico>YEAR(Order Date)</PillLead></Pill>
          </Shelf>
          <Shelf>
            <ShelfName><Ico w={12} h={12} sw={2}><path d="M0 2h2M0 6h2M0 10h2M3.5 2H12M3.5 6H12M3.5 10H12" /></Ico>Rows</ShelfName>
            <Pill $w={148}>Order ID</Pill>
          </Shelf>
          <Canvas>
            <SheetTitle>visualization moving avg</SheetTitle>
            <Grid>
              <HeadSide>Order ID</HeadSide>
              <HeadTop>Order Date</HeadTop>
              <Head>Discount<Year>2014</Year></Head>
              <Head>Sales<Year>2014</Year></Head>
              <Head>moving<br />avg alo..<Year>2014</Year></Head>
              {table.map((row, r) => row.map((v, c) => <Cell key={`${r}-${c}`} $odd={r % 2 === 1} $label={c === 0}>{v}</Cell>))}
            </Grid>
          </Canvas>
        </Sheet>
      </Body>

      <SheetTabs>
        <SheetTab $w={131} $pl={9}><Ico w={10} h={13}><path d="M1.5 2.5v8c0 1.5 6.5 1.5 6.5 0v-8c0-1.8-6.5-1.8-6.5 0s6.5 1.8 6.5 0" /></Ico>Data Source</SheetTab>
        <SheetTab $w={99}>define the sets</SheetTab>
        <SheetTab $w={102} $pl={5}>calculation sum</SheetTab>
        <SheetTab $w={153}>calculation min and max</SheetTab>
        <SheetTab $w={145} $pl={5}>visualization percentile</SheetTab>
        <SheetTab $w={153} $pl={5} $on>visualization moving avg</SheetTab>
        <SheetTab $w={32} $pl={8}><Ico w={16} h={16}><path d="M12 8V1.5H1.5v11h7M4 10V8M6.5 10V5.5M9 9V7" /><path d="M12 9v7M8.5 12.5h7" strokeWidth="1.8" /></Ico></SheetTab>
        <SheetTab $w={32} $pl={8}><Ico w={16} h={16}><path d="M12 8V1.5H1.5v11h7M6.5 1.5v11M1.5 7H12" /><path d="M12 9v7M8.5 12.5h7" strokeWidth="1.8" /></Ico></SheetTab>
        <SheetTab $w={32} $pl={8}><Ico w={16} h={16}><path d="M7 4c-1-1.5-3-2.5-5.5-2.5v10C4 11.5 6 12 7 13.5zM7 4c1-1.5 2.5-2.5 5-2.5V8" /><path d="M12 9v7M8.5 12.5h7" strokeWidth="1.8" /></Ico></SheetTab>
      </SheetTabs>
      <Status>
        <StatusText $w={66}>15 marks</StatusText>
        <StatusText $w={121}>5 rows by 3 columns</StatusText>
        <StatusText $w={812} $ls={0.1}>SUM of Measure Values: 10,720</StatusText>
        <StatusCell $w={127} /><StatusCell $w={27} /><StatusCell $w={27} /><StatusCell $w={47} />
        <StatusCell $w={71}>
          <Ico w={8} h={8} sw={1.2}><path d="M1 0v8" stroke="#aaa" /><path d="M7 0v8L2 4z" fill="#aaa" stroke="none" /></Ico>
          <Ico w={6} h={8}><path d="M5 0v8L1 4z" fill="#aaa" stroke="none" /></Ico>
          <Ico w={6} h={8}><path d="M1 0v8l4-4z" fill="#aaa" stroke="none" /></Ico>
          <Ico w={8} h={8} sw={1.2}><path d="M6.5 0v8" stroke="#aaa" /><path d="M1 0v8l5-4z" fill="#aaa" stroke="none" /></Ico>
        </StatusCell>
        <StatusCell $w={68}>
          <Ico w={11} h={11} sw={3}><path d="M0 1.5h11M0 5.5h11M0 9.5h11" stroke="#b4b4b4" strokeDasharray="3 1" /></Ico>
          <Ico w={11} h={11} sw={3}><path d="M0 3h11" stroke="#b4b4b4" strokeWidth="6" /><path d="M0 9.5h11" stroke="#b4b4b4" strokeDasharray="3 1" /></Ico>
          <Ico w={11} h={11}><rect width="11" height="11" fill="#666" stroke="none" /></Ico>
        </StatusCell>
      </Status>

      <Taskbar>
        <TaskItem $w={48}><svg width="16" height="16"><path d="M0 2.3L6.5 1.4V7.6H0zM7.3 1.3L16 0V7.6H7.3zM0 8.4h6.5v6.2L0 13.7zM7.3 8.4H16V16L7.3 14.7z" fill="#fff" /></svg></TaskItem>
        <TaskSearch>
          <Ico w={27} h={18} sw={1.4}><circle cx="9.5" cy="6.5" r="5.5" /><path d="M5.5 10.5L0.5 16" /></Ico>
          Type here to search
          <SearchArt>
            <svg width="80" height="38" viewBox="0 0 80 38" overflow="hidden">
              <path d="M0 38C3 27 12 22 24 21L60 22 80 20V38z" fill="#d9a47c" />
              <path d="M0 38C3 27 12 22 24 23C18 28 14 34 16 38z" fill="#e9be96" />
              <path d="M19 26C22 22 20 14 27 13C38 11 50 13 56 16C60 20 66 22 66 25C62 30 52 31 44 31C36 31 28 28 19 26z" fill="#51566c" />
              <path d="M22 20C24 14 30 13 38 14C48 14 54 16 56 19C48 23 32 20 22 24z" fill="#757a92" />
              <g fill="#33364a"><circle cx="28" cy="17" r="1.7" /><circle cx="36" cy="19" r="2.2" /><circle cx="46" cy="17" r="1.8" /><circle cx="54" cy="22" r="1.8" /><circle cx="27" cy="23" r="1.5" /><circle cx="42" cy="25" r="1.8" /></g>
              <g fill="#5b4a62"><circle cx="9" cy="34" r="1.5" /><circle cx="20" cy="34" r="1.8" /><circle cx="31" cy="35" r="1.2" /><circle cx="49" cy="35" r="2" /><circle cx="61" cy="34" r="2" /><circle cx="70" cy="28" r="1.8" /><circle cx="76" cy="24" r="1.4" /></g>
              <path d="M14 29l4-2M32 32l5 1M66 34l6 1M56 35l3 2" stroke="#a66f52" strokeWidth="1.3" />
            </svg>
          </SearchArt>
        </TaskSearch>
        <TaskItem $w={48}><Ico w={18} h={16} sw={1.3}><path d="M0.6 4h10v8h-10zM0.6 0v2h10V0M0.6 16v-2h10v2M15 0v3M15 9v7" /><path d="M13.5 5h3v3h-3z" fill="#fff" stroke="none" /></Ico></TaskItem>
        <TaskItem $w={54}>
          <svg width="24" height="24" viewBox="0 0 24 24">
            <circle cx="12" cy="12" r="12" fill="#1a7fc9" />
            <path d="M1 9C4-2 21-3 24 11C24 17 18 18 14.5 16C16 13 15 9 10.5 8.5C6 8 2 10 1 14z" fill="#39c3d6" />
            <path d="M12 0C19 0 24 5 24 11C24 17 18 18 15 16C19 12 18 5 12 0z" fill="#5ad47f" />
            <path d="M6 12C6 18 11 23 17 22.8C21 21 22 19 22 18C18 20 11 19 10.5 12z" fill="#12508f" />
            <circle cx="6" cy="18" r="5.8" fill="#777" /><circle cx="6" cy="16" r="2.2" fill="#ddd" /><path d="M2 21.5c1-4 7-4 8 0-2 2.5-6 2.5-8 0z" fill="#ddd" />
          </svg>
        </TaskItem>
        <TaskItem $w={2} />
        <TaskItem $w={40} $open>
          <svg width="22" height="20" viewBox="0 0 22 20">
            <path d="M1 0h8l2 3h10v4H1z" fill="#e8a613" /><path d="M0 4h22v15H0z" fill="#fcd469" />
            <path d="M4 19v-6.5c0-1.5 1-2 2-2h10c1 0 2 0.5 2 2V19h-4v-3.5H8V19z" fill="#3f94d6" />
          </svg>
        </TaskItem>
        <TaskItem $w={58}>
          <svg width="24" height="24" viewBox="0 0 24 24">
            <path d="M6 5V1.5h12V5" fill="none" stroke="#35b5ea" strokeWidth="2" /><path d="M0.5 4h23v17a2.5 2.5 0 0 1-2.5 2.5H3A2.5 2.5 0 0 1 0.5 21z" fill="#f6f6f6" />
            <path d="M7 9h4.5v4.5H7z" fill="#e8502b" /><path d="M12.5 9H17v4.5h-4.5z" fill="#81b83a" /><path d="M7 14.5h4.5V19H7z" fill="#2ba0e0" /><path d="M12.5 14.5H17V19h-4.5z" fill="#f6b526" />
          </svg>
        </TaskItem>
        <TaskItem $w={40}>
          <svg width="25" height="23" viewBox="0 0 25 23">
            <path d="M0 9L12.5 0 25 9v14H0z" fill="#1272c1" /><path d="M3 8h19v10H3z" fill="#0b559c" /><path d="M0 9l12.5 8L25 9v14H0z" fill="#2b9fe3" /><path d="M25 9v14H0z" fill="#45c0f3" /><path d="M3 10.5h19l-9.5 6.5z" fill="#f5fafd" />
          </svg>
        </TaskItem>
        <TaskItem $w={57}>
          <svg width="23" height="24" viewBox="0 0 23 24"><ellipse cx="11.5" cy="12" rx="11.5" ry="11.5" fill="#e0121f" /><ellipse cx="11.5" cy="12" rx="5" ry="8.5" fill="#1e1e1e" /></svg>
        </TaskItem>
        <TaskItem $w={42}><svg width="24" height="24" viewBox="0 0 24 24"><ChromeDisc /></svg></TaskItem>
        <TaskItem $w={57}>
          <svg width="24" height="23" viewBox="0 0 24 23">
            <ellipse cx="12" cy="8" rx="11" ry="7" transform="rotate(-20 12 8)" fill="#c93a32" /><ellipse cx="12.5" cy="6.8" rx="9" ry="5" transform="rotate(-20 12.5 7)" fill="#eee" />
            <path d="M2 10c2 4 9 4 11 2l-1 3c-4 2-9 1-10-1z" fill="#999" /><path d="M10 3l5 11M17 4l-5 9" stroke="#888" strokeWidth="1.5" />
            <circle cx="20" cy="16.5" r="2.6" fill="none" stroke="#2b80bf" strokeWidth="1.8" /><ellipse cx="15" cy="19.5" rx="2" ry="3" fill="none" stroke="#2b80bf" strokeWidth="1.8" /><path d="M14 13l4 2" stroke="#2b80bf" strokeWidth="2" />
          </svg>
        </TaskItem>
        <TaskItem $w={40} $open>
          <svg width="26" height="27" viewBox="0 0 26 27">
            <g transform="translate(0 1)"><ChromeDisc /></g>
            <circle cx="18.5" cy="18.5" r="7.5" fill="#a142b8" /><text x="18.5" y="21.8" fontSize="9" fill="#fff" textAnchor="middle">G</text>
          </svg>
        </TaskItem>
        <TaskItem $w={5} />
        <TaskItem $w={48} $open $on>
          <svg width="22" height="22" viewBox="0 0 22 22"><rect width="22" height="22" fill="#fafafa" /><g transform="translate(2 2)">
            {plus(9, 9, 3, "#3d7ea6", 1.5)}{[[4, 4.5], [14, 4.5], [4, 13.5], [14, 13.5], [9, 2], [9, 16], [1.5, 9], [16.5, 9]].map(([x, y]) => plus(x, y, 1.8, "#5fa3cc", 1.2))}
          </g></svg>
        </TaskItem>
        <Weather>
          <svg width="25" height="24" viewBox="0 0 25 24"><path d="M11 0c-1 6 2 10 8 10 0 5-5 8-10 6C3 14 1 11 1 8c3 0 9-1 10-8z" fill="#f5a623" /><path d="M6 23a5.5 5.5 0 0 1 0-11 7 7 0 0 1 12-2.5A6.5 6.5 0 0 1 19 23z" fill="#bcd3f5" /><path d="M6 23a5 5 0 0 1-4.5-3c6 1 15 0 22-4 0 4-2 7-5 7z" fill="#93b3e6" /></svg>
          <Temp>30°C</Temp>Mostly cloudy
        </Weather>
        <TaskItem $w={12}><Ico w={12} h={8} sw={1.3}><path d="M0.5 7L6 1.5 11.5 7" /></Ico></TaskItem>
        <TaskItem $w={36}><Ico w={17} h={14} sw={1.2}><path d="M5 4.5h11v8H5zM1 1v3.5c0 1.5 1 2 2 2s2-0.5 2-2V1M2 0v2M4 0v2M3 6.5V12h3" /><path d="M8 6.5h4v4H8z" fill="#fff" /></Ico></TaskItem>
        <TaskItem $w={12}><svg width="17" height="14" viewBox="0 0 17 14"><path d="M3.5 10a3 3 0 0 1 0-6A5 5 0 0 1 13 3.5 3.5 3.5 0 0 1 13.5 10z" fill="#aaa" /><circle cx="12" cy="9.5" r="4.5" fill="#1b78d0" /><path d="M9.5 9a2.5 2.5 0 0 1 5 0M14.5 10.5a2.5 2.5 0 0 1-5 0" stroke="#fff" fill="none" /></svg></TaskItem>
        <TaskItem $w={38}><Ico w={14} h={14} sw={1.1}><path d="M1 12A11 11 0 0 1 12.5 1.5M4 12.5A8 8 0 0 1 12.5 4.5M7 13a5 5 0 0 1 5.5-5M10 13a2.5 2.5 0 0 1 2.5-2" /></Ico></TaskItem>
        <TaskItem $w={11}><Ico w={17} h={14} sw={1.1}><path d="M1 5h2.5L7 1.5v11L3.5 9H1zM9.5 4.5c1.5 1.5 1.5 3.5 0 5M12 3c2.5 2.5 2.5 5.5 0 8M14 1c3.5 4 3.5 8 0 12" /></Ico></TaskItem>
        <Clock><span>8:20 PM</span><span>03/04/24</span></Clock>
        <TaskItem $w={34}><Ico w={16} h={17} sw={1.3}><path d="M0.7 1h14.6v11.5H10.5L8 15.5 5.5 12.5H0.7z" /></Ico></TaskItem>
        <ShowDesktop />
      </Taskbar>

      <ShowMe>
        <Thumbs>
          {thumbs.map((t, i) => (
            <Thumb key={i} $on={i === 13}>
              <svg width={i === 13 ? 52 : 54} height={i === 13 ? 38 : 40} viewBox={i === 13 ? "6 6 156 114" : "3 3 162 120"}>{t}</svg>
            </Thumb>
          ))}
        </Thumbs>
        <Hint $h={23}><span>For <b>lines</b> (discrete) try</span></Hint>
        <Hint $h={25}>1 date<HintMark><Calendar /></HintMark></Hint>
        <Hint $h={24}>0 or more<HintPill $w={90}>Dimensions</HintPill></Hint>
        <Hint $h={32}>1 or more<HintPill $green $w={79}>Measures</HintPill></Hint>
      </ShowMe>
      <ShowMeTab>
        <svg width="14" height="15"><rect width="11" height="3" fill="#876f9b" /><rect y="4" width="14" height="3" fill="#80a4cc" /><rect y="8" width="5" height="3" fill="#f5a878" /><rect y="12" width="8" height="3" fill="#f8697c" /></svg>
        Show Me
      </ShowMeTab>
    </Screen>
  );
}
